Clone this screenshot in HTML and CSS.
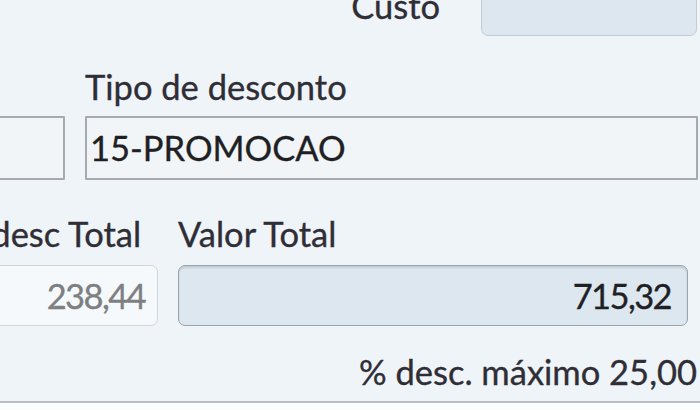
FILE: index.html
```html
<!DOCTYPE html>
<html lang="pt">
<head>
<meta charset="utf-8">
<link rel="stylesheet" href="styles.css">
</head>
<body>
<div class="form">
  <div class="row row-custo">
    <span class="lbl">Custo</span>
    <div class="box box-ro box-custo"></div>
  </div>
  <div class="row row-tipo">
    <div class="field field-left">
      <span class="lbl">&nbsp;</span>
      <div class="box box-plain"></div>
    </div>
    <div class="field field-tipo">
      <span class="lbl">Tipo de desconto</span>
      <div class="box box-plain"><span class="val">15-PROMOCAO</span></div>
    </div>
  </div>
  <div class="row row-total">
    <div class="field field-desc">
      <span class="lbl">Valor desc Total</span>
      <div class="box box-light"><span class="val num val-gray">238,44</span></div>
    </div>
    <div class="field field-valor">
      <span class="lbl">Valor Total</span>
      <div class="box box-ro box-valor"><span class="val num">715,32</span></div>
    </div>
  </div>
  <div class="row row-max">
    <span class="lbl">% desc. máximo 25,00</span>
  </div>
</div>
</body>
</html>
```

FILE: styles.css
```css
html, body {
  margin: 0;
  padding: 0;
}
body {
  width: 700px;
  height: 410px;
  overflow: hidden;
  background: #fbfcfd;
  font-family: Lato, "Liberation Sans", sans-serif;
  font-size: 34.5px;
  color: #2f2e36;
  -webkit-text-stroke: 0.35px currentColor;
}
.form {
  display: flex;
  flex-direction: column;
  height: 403px;
  border-bottom: 2px solid #b9bfc4;
  background: #eff4f8;
  box-sizing: border-box;
}
.row {
  display: flex;
}
.lbl {
  display: block;
  line-height: 36px;
  height: 36px;
  white-space: nowrap;
}
.box {
  box-sizing: border-box;
  display: flex;
  align-items: center;
}
.val {
  line-height: 36px;
  white-space: nowrap;
}
.num {
  letter-spacing: -1.6px;
}
.row-custo {
  margin-top: -24px;
  justify-content: flex-end;
  align-items: center;
  gap: 41px;
  padding-right: 3px;
}
.box-custo {
  width: 216px;
  height: 60px;
}
.box-ro {
  background: #dce7ef;
  border: 1.5px solid #c3ccd4;
  border-radius: 7px;
}
.row-tipo {
  margin-top: 33px;
  gap: 20px;
  padding-right: 2px;
}
.field {
  display: flex;
  flex-direction: column;
  gap: 11px;
}
.box-plain {
  height: 64px;
  background: #f1f5f8;
  border: 2px solid #a6a9ad;
  border-radius: 1px;
  padding-left: 3px;
  color: #1f1f24;
}
.field-left {
  width: 150px;
  margin-left: -85px;
}
.field-tipo {
  flex: 1;
}
.row-total {
  margin-top: 36px;
  gap: 20px;
  padding-right: 12px;
}
.row-total .field {
  gap: 13px;
}
.field-desc {
  width: 253px;
  margin-left: -95px;
}
.field-valor {
  flex: 1;
}
.box-light {
  height: 61px;
  background: #f6f9fb;
  border: 1.5px solid #cfd5da;
  border-radius: 7px;
  justify-content: flex-end;
  padding-right: 12px;
}
.val-gray {
  color: #7d7f82;
}
.box-valor {
  height: 61px;
  border-color: #9ca4ab;
  box-shadow: inset 0 2px 2px rgba(0, 0, 0, 0.12);
  justify-content: flex-end;
  padding-right: 16px;
  color: #1f1f24;
}
.row-max {
  margin-top: 28px;
  justify-content: flex-end;
  padding-right: 3px;
}
```
